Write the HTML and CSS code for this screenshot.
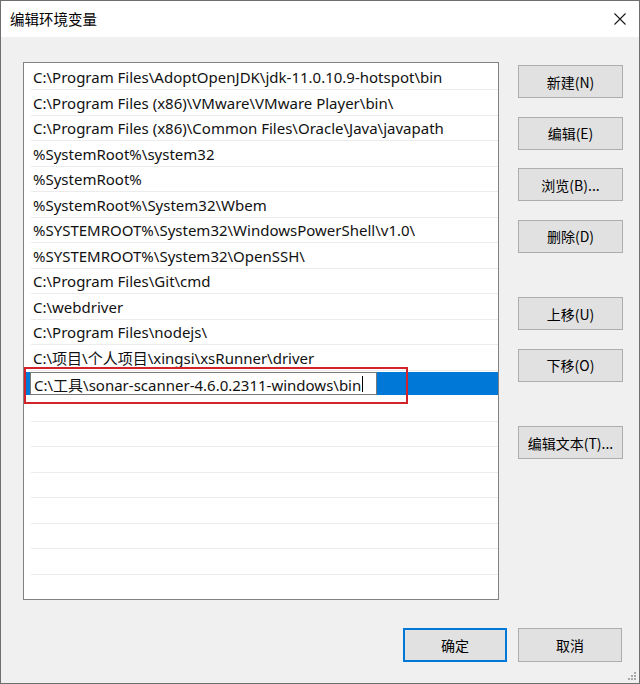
FILE: index.html
```html
<!DOCTYPE html>
<html lang="zh-CN">
<head>
<meta charset="utf-8">
<title>编辑环境变量</title>
<link rel="stylesheet" href="styles.css">
</head>
<body>
<div class="window">
  <div class="titlebar">
    <span class="title">编辑环境变量</span>
    <svg class="close" width="14" height="14" viewBox="0 0 14 14"><path d="M1.5 1.5 L12.5 12.5 M12.5 1.5 L1.5 12.5" stroke="#1a1a1a" stroke-width="1.1" fill="none"/></svg>
  </div>
  <div class="body">
    <div class="main">
      <div class="list">
        <div class="row"><span>C:\Program Files\AdoptOpenJDK\jdk-11.0.10.9-hotspot\bin</span></div>
        <div class="row"><span>C:\Program Files (x86)\VMware\VMware Player\bin\</span></div>
        <div class="row"><span>C:\Program Files (x86)\Common Files\Oracle\Java\javapath</span></div>
        <div class="row"><span>%SystemRoot%\system32</span></div>
        <div class="row"><span>%SystemRoot%</span></div>
        <div class="row"><span>%SystemRoot%\System32\Wbem</span></div>
        <div class="row"><span>%SYSTEMROOT%\System32\WindowsPowerShell\v1.0\</span></div>
        <div class="row"><span>%SYSTEMROOT%\System32\OpenSSH\</span></div>
        <div class="row"><span>C:\Program Files\Git\cmd</span></div>
        <div class="row"><span>C:\webdriver</span></div>
        <div class="row"><span>C:\Program Files\nodejs\</span></div>
        <div class="row"><span>C:\项目\个人项目\xingsi\xsRunner\driver</span></div>
        <div class="row selected">
          <div class="editbox"><span>C:\工具\sonar-scanner-4.6.0.2311-windows\bin</span><i class="caret"></i></div>
          <div class="highlight"></div>
        </div>
        <div class="row"></div>
        <div class="row"></div>
        <div class="row"></div>
        <div class="row"></div>
        <div class="row"></div>
        <div class="row"></div>
        <div class="row"></div>
        <div class="row"></div>
      </div>
      <div class="side">
        <button class="btn">新建(N)</button>
        <button class="btn">编辑(E)</button>
        <button class="btn">浏览(B)...</button>
        <button class="btn">删除(D)</button>
        <button class="btn gap">上移(U)</button>
        <button class="btn">下移(O)</button>
        <button class="btn gap">编辑文本(T)...</button>
      </div>
    </div>
    <div class="footer">
      <button class="btn default">确定</button>
      <button class="btn">取消</button>
    </div>
  </div>
  <svg class="grip" width="10" height="10" viewBox="0 0 10 10">
    <rect x="7" y="1" width="2" height="2" fill="#a8a8a8"/>
    <rect x="4" y="4" width="2" height="2" fill="#a8a8a8"/>
    <rect x="7" y="4" width="2" height="2" fill="#a8a8a8"/>
    <rect x="1" y="7" width="2" height="2" fill="#a8a8a8"/>
    <rect x="4" y="7" width="2" height="2" fill="#a8a8a8"/>
    <rect x="7" y="7" width="2" height="2" fill="#a8a8a8"/>
  </svg>
</div>
</body>
</html>
```
FILE: styles.css
```css
* { box-sizing: border-box; }
html, body { margin: 0; padding: 0; }
body {
  width: 640px;
  height: 684px;
  overflow: hidden;
  font-family: "Noto Sans", "Noto Sans CJK SC", sans-serif;
  color: #000;
}
.window {
  position: relative;
  width: 640px;
  height: 684px;
  background: #f0f0f0;
  border: 1px solid #6e6e6e;
  display: flex;
  flex-direction: column;
}
.titlebar {
  height: 36px;
  background: #fff;
  display: flex;
  align-items: center;
  justify-content: space-between;
  padding: 0 12px 0 9px;
  flex: none;
}
.title {
  font-family: "Noto Sans CJK SC", sans-serif;
  font-size: 14.5px;
  margin-top: -2px;
}
.close { margin-top: -1px; }
.body {
  flex: 1;
  display: flex;
  flex-direction: column;
  padding: 25px 0 0 22px;
}
.main {
  display: flex;
  align-items: flex-start;
}
.list {
  width: 476px;
  height: 538px;
  background: #fff;
  border: 1px solid #828282;
  padding-top: 1.5px;
  overflow: hidden;
}
.row {
  position: relative;
  height: 25.5px;
  margin-left: 7px;
  border-bottom: 1px solid #ececec;
  display: flex;
  align-items: center;
  font-size: 15px;
  color: #111;
  white-space: nowrap;
}
.row span { padding-left: 2px; padding-top: 1px; }
.row.selected {
  margin-left: 0;
  background: linear-gradient(to bottom, transparent 1.5px, #0078d7 1.5px);
  border-bottom-color: transparent;
}
.editbox {
  width: 347px;
  height: 23px;
  margin-left: 6px;
  margin-top: 2px;
  background: #fff;
  border: 1px solid #7a7a7a;
  display: flex;
  align-items: center;
}
.editbox span { padding-left: 3px; }
.caret {
  display: inline-block;
  width: 1px;
  height: 16px;
  background: #000;
  margin-left: 1px;
}
.highlight {
  position: absolute;
  left: 0;
  top: -3.5px;
  width: 384px;
  height: 37px;
  border: 2px solid #d3222a;
}
.side {
  display: flex;
  flex-direction: column;
  margin-left: 19px;
  padding-top: 3px;
}
.btn {
  width: 105px;
  height: 33px;
  background: #e1e1e1;
  border: 1px solid #adadad;
  font-family: "Noto Sans CJK SC", sans-serif;
  font-size: 14px;
  color: #000;
  padding: 0;
  margin: 0 0 18.5px 0;
}
.btn.gap { margin-top: 26px; }
.footer {
  display: flex;
  justify-content: flex-end;
  gap: 11px;
  padding: 28px 17px 0 0;
}
.footer .btn { width: 104px; height: 34px; margin: 0; }
.btn.default { border: 2px solid #0078d7; }
.grip {
  position: absolute;
  right: 2px;
  bottom: 2px;
}
```
